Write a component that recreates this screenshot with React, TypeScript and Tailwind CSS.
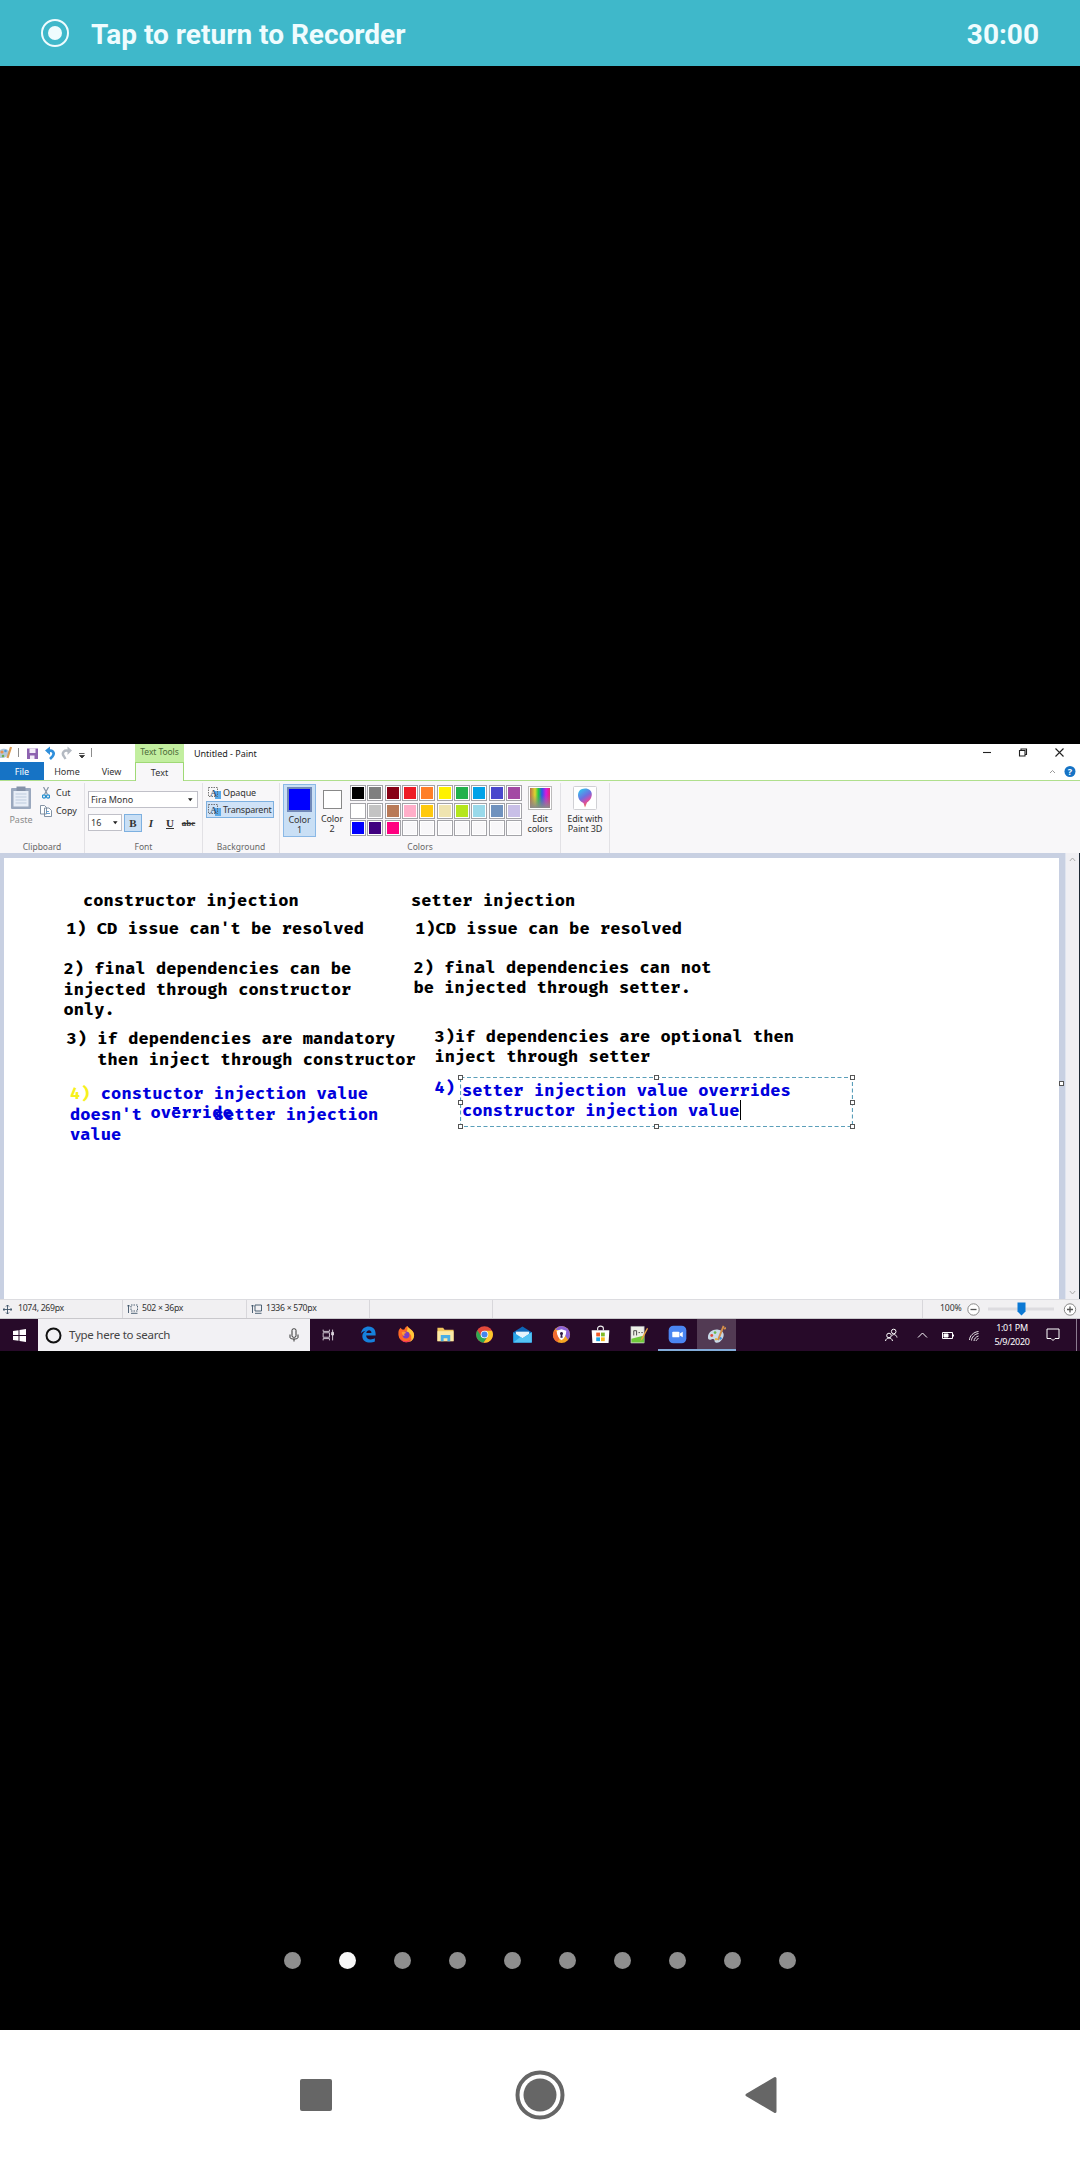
import React from "react";

const UI = "font-['Segoe_UI','Noto_Sans','Open_Sans',sans-serif]";

function TitleBar() {
  return (
    <div className="flex h-[37px] bg-white">
      <div className="flex w-[135px] flex-col">
        <div className="flex h-[18px] items-center">
          <svg width="93" height="18" viewBox="0 0 93 18" fill="none">
            <path d="M0 6C3 4 7.500 4 9 7.500S6 14.500 0 14Z" fill="#b3c6d9" />
            <circle cx="2" cy="8" r="1.600" fill="#e8924c" />
            <circle cx="5.500" cy="7" r="1.300" fill="#4f9be0" />
            <circle cx="3" cy="12" r="1.300" fill="#6ab04c" />
            <path d="M11 3 7.500 14" stroke="#d99a52" strokeWidth="2.200" />
            <path d="M18.500 4v9" stroke="#8d8d8d" />
            <path d="M27 4.500h11v10.500H27z" fill="#8d62b0" />
            <path d="M29.500 4.500h6v4.500h-6zM30 11.500h4.500v3.500h-4.500z" fill="#f3ecf8" />
            <path d="M47 7.500C52 5 55.500 8.500 52.500 12.500l-2.500 2.500" stroke="#2f8fdb" strokeWidth="2.600" />
            <path d="M45 6.500 50 2.500v8.500z" fill="#2f8fdb" />
            <path d="M69.500 7.500C64.500 5 61 8.500 64 12.500l1.500 2.500" stroke="#b4bac2" strokeWidth="2.400" />
            <path d="M72 6.500 67.500 2.500v8.500z" fill="#b4bac2" />
            <path d="M79 9.500h5.500M79.500 11.500h5l-2.500 2.500z" stroke="#333" strokeWidth=".8" fill="#333" />
            <path d="M91.500 4v9" stroke="#8d8d8d" />
          </svg>
        </div>
        <div className="flex h-[19px] items-center border-b border-[#b0df8d] text-[9px] text-[#333]">
          <div className="flex h-[18px] w-[44px] items-center justify-center bg-[#1673c5] pt-px text-white">File</div>
          <div className="w-[46px] pt-px text-center">Home</div>
          <div className="w-[43px] pt-px text-center">View</div>
        </div>
      </div>
      <div className="flex w-[49px] flex-col text-center">
        <div className="h-[18px] bg-[#c2ee9f] text-[8.500px] leading-[16px] tracking-[-0.08px] text-[#4d6b3a]">Text Tools</div>
        <div className="h-[19px] border border-b-0 border-[#9fd975] bg-[#f8f7f9] text-[9px] leading-[19px] text-[#333]">Text</div>
      </div>
      <div className="flex flex-1 flex-col border-b border-[#b0df8d]">
        <div className="flex h-[18px] items-center">
          <div className="ml-[10px] pt-px text-[9px] tracking-[-0.02px] text-[#222]">Untitled - Paint</div>
          <div className="ml-auto flex">
            <svg width="99" height="18" viewBox="0 0 99 18" fill="none" stroke="#222" strokeWidth="1.100">
              <path d="M2 8.500h8" />
              <path d="M38.500 6.500h5.500V12h-5.500zM40 6.500V5h5.500v5.500H44" />
              <path d="m74.500 4.500 8 8m0-8-8 8" />
            </svg>
          </div>
        </div>
        <div className="flex flex-1 items-center justify-end">
          <svg width="31" height="17" viewBox="0 0 31 17" fill="none">
            <path d="m1 10 2.500-2.500L6 10" stroke="#999" />
            <circle cx="21" cy="8.500" r="5.500" fill="#1673c5" />
            <text x="21" y="11.800" textAnchor="middle" fontSize="9" fontWeight="700" fill="#fff">?</text>
          </svg>
        </div>
      </div>
    </div>
  );
}

function Group({ w, label, children }: { w: string; label: string; children: React.ReactNode }) {
  return (
    <div className={"flex h-full shrink-0 flex-col border-r border-[#e2e1e5] " + w}>
      <div className="h-[58px]">{children}</div>
      <div className="text-center text-[8.500px] leading-[12px] text-[#666]">{label}</div>
    </div>
  );
}

function TextMode() {
  return (
    <svg width="13" height="12" viewBox="0 0 13 12" fill="none">
      <path d="M7 4h6v8H7z" fill="#58a9e8" />
      <path d="M.5.5h9v9h-9z" stroke="#555" strokeWidth=".8" strokeDasharray="1.500 1" />
      <text x="5.500" y="9" textAnchor="middle" fontSize="9" fontFamily="Liberation Serif" fontWeight="700" fill="#2b5578">A</text>
    </svg>
  );
}

const PALETTE = [
  "bg-[#000000]", "bg-[#7f7f7f]", "bg-[#880015]", "bg-[#ed1c24]", "bg-[#ff7f27]", "bg-[#fff200]", "bg-[#22b14c]", "bg-[#00a2e8]", "bg-[#4a48cc]", "bg-[#a349a4]",
  "bg-[#ffffff]", "bg-[#c3c3c3]", "bg-[#b97a57]", "bg-[#ffaec9]", "bg-[#ffc90e]", "bg-[#efe4b0]", "bg-[#b5e61d]", "bg-[#99d9ea]", "bg-[#7092be]", "bg-[#c8bfe7]",
  "bg-[#0000ff]", "bg-[#400080]", "bg-[#ff0080]", "bg-[#f8f7f9]", "bg-[#f8f7f9]", "bg-[#f8f7f9]", "bg-[#f8f7f9]", "bg-[#f8f7f9]", "bg-[#f8f7f9]", "bg-[#f8f7f9]",
];

function Ribbon() {
  return (
    <div className="flex h-[72px] bg-[#f8f7f9] pt-[2px] text-[9px] leading-[10px] text-[#333]">
      <Group w="w-[85px]" label="Clipboard">
        <div className="flex pt-[2px]">
          <div className="flex w-[42px] flex-col items-center gap-[5px] text-[#8b8b8b]">
            <svg width="22" height="25" viewBox="0 0 22 25">
              <rect x="1" y="3" width="20" height="21" rx="1" fill="#9aa8be" />
              <path d="M3.500 6h15v15.500h-15z" fill="#e8eef7" />
              <path d="M5.500 9h11M5.500 12h11M5.500 15h11M5.500 18h11" stroke="#bdcbdd" />
              <path d="M6.500 1.500h9V6h-9z" fill="#8592a8" />
            </svg>
            <span>Paste</span>
          </div>
          <div className="flex flex-col gap-[4px] pt-px">
            <div className="flex h-[14px] items-center gap-[6px]">
              <svg width="8" height="12" viewBox="0 0 8 12" fill="none">
                <path d="m1.500 0 4 7.500M6.500 0l-4 7.500" stroke="#8493a5" strokeWidth="1.200" />
                <circle cx="2" cy="9.500" r="1.600" stroke="#278fcf" strokeWidth="1.300" />
                <circle cx="6" cy="9.500" r="1.600" stroke="#278fcf" strokeWidth="1.300" />
              </svg>
              <span>Cut</span>
            </div>
            <div className="-ml-[2px] flex h-[14px] items-center gap-[4px]">
              <svg width="12" height="12" viewBox="0 0 12 12" fill="#fff" stroke="#75869a" strokeWidth=".9">
                <path d="M.5.5h4L6.500 2.500V9h-6zM4.500 3h4.500l2.500 2.500v6h-7z" />
                <path d="M6 6.500h3M6 8.500h4" stroke="#5b9ad0" />
              </svg>
              <span className="tracking-[-0.1px]">Copy</span>
            </div>
          </div>
        </div>
      </Group>
      <Group w="w-[118px]" label="Font">
        <div className="flex flex-col gap-[6px] pl-[3px] pt-[8px]">
          <div className="flex h-[17px] w-[110px] items-center justify-between border border-[#c0c0c8] bg-white px-[2px]">
            <span className="tracking-[-0.05px]">Fira Mono</span>
            <svg width="5" height="4" viewBox="0 0 6 4" className="mr-[2px]"><path d="M0 0h5.500L2.700 3.500z" fill="#222" /></svg>
          </div>
          <div className="flex h-[17px] items-center text-[11px]">
            <div className="flex h-[17px] w-[34px] items-center justify-between border border-[#c0c0c8] bg-white px-[2px] text-[9px]">
              <span>16</span>
              <svg width="5" height="4" viewBox="0 0 6 4" className="mr-px"><path d="M0 0h5.500L2.700 3.500z" fill="#222" /></svg>
            </div>
            <div className="ml-[2px] flex h-[18px] w-[18px] items-center justify-center border border-[#7db0e0] bg-[#c9dff5] font-['Liberation_Serif',serif] font-bold">B</div>
            <div className="w-[18px] text-center font-['Liberation_Serif',serif] font-bold italic">I</div>
            <div className="w-[20px] text-center font-['Liberation_Serif',serif] font-bold underline">U</div>
            <div className="w-[17px] text-center font-['Liberation_Serif',serif] text-[9px] font-bold line-through">abc</div>
          </div>
        </div>
      </Group>
      <Group w="w-[77px]" label="Background">
        <div className="flex flex-col pl-[3px] pt-[2px]">
          <div className="flex h-[15px] items-center gap-[2px] pl-[2px]"><TextMode /><span className="tracking-[-0.12px]">Opaque</span></div>
          <div className="mt-[1px] flex h-[17px] w-[68px] items-center gap-[2px] border border-[#7db0e0] bg-[#cfe2f7] pl-px tracking-[-0.22px]"><TextMode /><span>Transparent</span></div>
        </div>
      </Group>
      <Group w="w-[281px]" label="Colors">
        <div className="flex pl-[3px] pt-[1px] text-center">
          <div className="flex h-[53px] w-[33px] flex-col items-center border border-[#8ab8e6] bg-[#c9dff5] pt-[2px]">
            <div className="mb-[3px] h-[25px] w-[25px] border-2 border-[#7188b8] bg-[#0000ff]" />
            <span className="tracking-[-0.1px]">Color<br />1</span>
          </div>
          <div className="flex w-[32px] flex-col items-center pt-[6px]">
            <div className="mb-[5px] h-[19px] w-[19px] border border-[#888] bg-white" />
            <span className="tracking-[-0.1px]">Color<br />2</span>
          </div>
          <div className="ml-[2px] mt-[1px] grid h-[51px] w-[172px] grid-cols-10 gap-[1.500px]">
            {PALETTE.map((c, i) => (
              <div key={i} className="border border-[#a3a3a8] bg-white p-px"><div className={"h-full w-full " + c} /></div>
            ))}
          </div>
          <div className="ml-[5px] flex w-[26px] flex-col items-center pt-[2px]">
            <svg width="24" height="24" viewBox="0 0 24 24" className="mb-[4px] shrink-0">
              <defs>
                <linearGradient id="hue"><stop stopColor="#b86a4c" /><stop offset=".25" stopColor="#e0d62f" /><stop offset=".42" stopColor="#22c746" /><stop offset=".6" stopColor="#2a57e8" /><stop offset=".8" stopColor="#d51be0" /><stop offset="1" stopColor="#e8276b" /></linearGradient>
                <linearGradient id="fade" x2="0" y2="1"><stop offset=".35" stopColor="#888" stopOpacity="0" /><stop offset="1" stopColor="#8a8a8a" /></linearGradient>
              </defs>
              <rect x=".5" y=".5" width="23" height="23" fill="#fff" stroke="#bbb" />
              <path d="M2 2h20v20H2z" fill="url(#hue)" />
              <path d="M2 2h20v20H2z" fill="url(#fade)" />
            </svg>
            <span className="tracking-[-0.1px]">Edit<br />colors</span>
          </div>
        </div>
      </Group>
      <Group w="w-[49px]" label="">
        <div className="flex flex-col items-center pt-[3px] text-center">
          <svg width="24" height="24" viewBox="0 0 24 24" className="mb-[4px]">
            <defs><linearGradient id="drop" x1=".2" x2=".7" y2="1"><stop stopColor="#31c5ee" /><stop offset=".45" stopColor="#6f6ee0" /><stop offset=".7" stopColor="#d84ca5" /><stop offset="1" stopColor="#f08a30" /></linearGradient></defs>
            <rect x=".5" y=".5" width="23" height="23" rx="1" fill="#fff" stroke="#d0d0d4" />
            <path d="M12 2.500c9 0 8.500 10 2 14l-2 5-1.500-4.500C3 14 3 2.500 12 2.500" fill="url(#drop)" />
          </svg>
          <span className="whitespace-nowrap tracking-[-0.15px]">Edit with<br />Paint 3D</span>
        </div>
      </Group>
    </div>
  );
}

const NOTES: { at: string; text: string }[] = [
  { at: "left-[79px] top-[33px] text-black", text: "constructor injection" },
  { at: "left-[62px] top-[61px] text-black", text: "1) CD issue can't be resolved" },
  { at: "left-[59.500px] top-[101px] text-black", text: "2) final dependencies can be\ninjected through constructor\nonly." },
  { at: "left-[62.500px] top-[171px] text-black", text: "3) if dependencies are mandatory\n   then inject through constructor" },
  { at: "left-[146.500px] top-[245px] text-[#0000dc]", text: "override" },
  { at: "left-[407px] top-[33px] text-black", text: "setter injection" },
  { at: "left-[411px] top-[61px] text-black", text: "1)CD issue can be resolved" },
  { at: "left-[409.500px] top-[99.500px] text-black", text: "2) final dependencies can not\nbe injected through setter." },
  { at: "left-[430.500px] top-[168.500px] text-black", text: "3)if dependencies are optional then\ninject through setter" },
  { at: "left-[430.500px] top-[219.500px] text-[#0000dc]", text: "4)" },
];

const HANDLES = [
  "left-[-2px] top-[-2px]", "left-[194px] top-[-2px]", "left-[390px] top-[-2px]",
  "left-[-2px] top-[23px]", "left-[390px] top-[23px]",
  "left-[-2px] top-[47px]", "left-[194px] top-[47px]", "left-[390px] top-[47px]",
];

function Canvas() {
  return (
    <div className="flex h-[446px] bg-[#c8d0e2]">
      <div className="relative ml-[4px] mt-[5px] w-[1055px] bg-white font-['Fira_Mono','DejaVu_Sans_Mono',monospace] text-[17px] font-bold leading-[20.700px] tracking-[0.075px] whitespace-pre">
        {NOTES.map((n) => (
          <div key={n.at} className={"absolute " + n.at}>{n.text}</div>
        ))}
        <div className="absolute left-[66px] top-[226px] text-[#0000dc]">
          <span className="text-[#f7f11c]">4)</span>{" constuctor injection value\ndoesn't       setter injection\nvalue"}
        </div>
        <div className="absolute left-[169px] top-[249px] h-[2px] w-[6px] bg-[#0000dc]" />
        <div className="absolute left-[456px] top-[219px] h-[50px] w-[393px]">
          <svg width="393" height="50" viewBox="0 0 393 50" fill="none" className="absolute left-0 top-0">
            <path d="M.5.5h392v49H.5z" stroke="#5b9fba" strokeWidth="1.200" strokeDasharray="4 2.500" />
          </svg>
          {HANDLES.map((h) => (
            <div key={h} className={"absolute h-[5px] w-[5px] border border-[#555] bg-white " + h} />
          ))}
          <div className="pl-[2px] pt-[3.500px] text-[#0000dc]">{"setter injection value overrides\nconstructor injection value"}</div>
          <div className="absolute left-[280px] top-[23px] h-[20px] w-px bg-black" />
        </div>
        <div className="absolute left-[1055px] top-[223px] h-[5px] w-[5px] border border-[#555] bg-white" />
      </div>
      <div className="ml-auto flex w-[14px] flex-col items-center justify-between border-l border-[#dfe4ef] bg-[#f0eff3] py-[4px]">
        <svg width="7" height="5" viewBox="0 0 7 5" fill="none" stroke="#aaa"><path d="m.8 4 2.700-3L6.200 4" /></svg>
        <svg width="7" height="5" viewBox="0 0 7 5" fill="none" stroke="#aaa"><path d="m.8 1 2.700 3L6.200 1" /></svg>
      </div>
      <div className="w-px bg-[#1c2733]" />
    </div>
  );
}

function StatusBar() {
  return (
    <div className="flex h-[20px] items-center border-y border-t-[#dcdce0] border-b-[#c9c8cc] bg-[#f1f0f2] text-[8.700px] tracking-[-0.3px] text-[#333]">
      <div className="flex h-full w-[123px] items-center gap-[6px] border-r border-[#d8d7db] pl-[3px]">
        <svg width="9" height="9" viewBox="0 0 9 9" fill="none" stroke="#3c5268"><path d="M4.500 0v9M0 4.500h9M3 1.500 4.500 0 6 1.500M3 7.500 4.500 9 6 7.500M1.500 3 0 4.500 1.500 6M7.500 3 9 4.500 7.500 6" strokeWidth=".9" /></svg>
        1074, 269px
      </div>
      <div className="flex h-full w-[124px] items-center gap-[4px] border-r border-[#d8d7db] pl-[4px]">
        <svg width="11" height="10" viewBox="0 0 11 10" fill="none" stroke="#3c5268" strokeWidth=".9"><path d="M1.500 9V1M0 2.500 1.500 1 3 2.500M4 9.300h6.500" /><path d="M4 1h6.500v6H4z" strokeDasharray="1.500 1" /></svg>
        502 × 36px
      </div>
      <div className="flex h-full w-[123px] items-center gap-[4px] border-r border-[#d8d7db] pl-[4px]">
        <svg width="11" height="10" viewBox="0 0 11 10" fill="none" stroke="#3c5268" strokeWidth=".9"><path d="M1.500 9V1M0 2.500 1.500 1 3 2.500M4 9.300h6.500M4 1h6.500v6H4z" /></svg>
        1336 × 570px
      </div>
      <div className="h-full w-[123px] border-r border-[#d8d7db]" />
      <div className="ml-auto flex h-full w-[158px] items-center border-l border-[#d8d7db] pl-[17px]">
        <span className="w-[27px] tracking-[-0.1px]">100%</span>
        <svg width="113" height="16" viewBox="0 0 113 16" fill="none">
          <circle cx="6.500" cy="8.500" r="5.700" fill="#fff" stroke="#888" />
          <path d="M3.500 8.500h6" stroke="#555" strokeWidth="1.300" />
          <path d="M21 8h66" stroke="#dddce0" strokeWidth="3" />
          <path d="M50.500 1.500h8v9l-4 4-4-4z" fill="#0b78d4" />
          <circle cx="103" cy="8.500" r="5.700" fill="#fff" stroke="#888" />
          <path d="M100 8.500h6M103 5.500v6" stroke="#555" strokeWidth="1.300" />
        </svg>
      </div>
    </div>
  );
}

const APPS: React.ReactNode[] = [
  <g fill="none" stroke="#ddd5df" strokeWidth="1"><path d="M3.500 4v2h7V4M3.500 16v-2h7v2M3.500 7.500h7v5h-7zM14 4v12" /><path d="M13 7h2v3h-2z" fill="#ddd5df" /></g>,
  <path d="M2 9C3 3.500 6.500 1.500 10 1.500c5.500 0 8 4 7.500 9.500H7.500c.2 5 6 5 9.200 3v3.300C12 19.500 3.500 19 3.500 11.500 3.500 8.500 6 6.500 7.500 6 5.500 6 3.500 7 2 9m5.700-.7h5.400c0-3.600-4.800-3.800-5.400 0" fill="#1681dc" />,
  <g><path d="M1.500 8c0-2 1-4 2.500-5 .5 2 2 2 3.500 2 1-2 2-3.500 3.500-4 1 3 7 4 7 10a8.300 8.300 0 0 1-16.500-.5Z" fill="#ff6a26" /><path d="M11 1c1 3 7 4 7 10a8 8 0 0 1-5 7c4-6 2-9-3-11 1.500-2 1-4 1-6" fill="#ffc73a" /><path d="M3 12c2 6 8 7 13 2-3 6-11 6-13-2" fill="#ef3461" /><circle cx="9.500" cy="10.500" r="3.600" fill="#7b3fc4" /><path d="M5 7.500c2-1 4-.5 5 1-2 0-3 1-2 3-2 0-3-2-3-4" fill="#ff9a32" /></g>,
  <g><path d="M1.500 3h6l1.500 2h9.500v12h-17z" fill="#f2c65e" /><path d="M1.500 6.500h17V17h-17z" fill="#fce9a6" /><path d="M5 17v-6.500h10V17h-3v-3H8v3z" fill="#4aaee4" /></g>,
  <g><circle cx="10" cy="10" r="8.800" fill="#e2493b" /><path d="M2.400 5.600A8.800 8.800 0 0 0 9 18.700l4.500-7.200-7 .2z" fill="#2ea853" /><path d="M10 6h7.900A8.800 8.800 0 0 1 9 18.700l4.500-6.700C14.500 9 13 7 10 6" fill="#fbc72c" /><circle cx="10" cy="10" r="4" fill="#fff" /><circle cx="10" cy="10" r="3.200" fill="#4486ee" /></g>,
  <g><path d="m.3 7.500 9.700-6 9.700 6V18.500H.3z" fill="#0d65b6" /><path d="M3 7h14v7H3z" fill="#e6f4fc" /><path d="m.3 7.500 9.700 6.500 9.700-6.500v11H.3z" fill="#28a7e9" /><path d="m.3 18.500 7.500-6 2.200 1.500 9.700-6.500v11z" fill="#55c4f4" /></g>,
  <g><circle cx="10" cy="10" r="9" fill="#f5a623" /><path d="M10 1A9 9 0 0 1 19 10c0 2-1 4-2 5.500L10 6 3.500 5C5 2.500 7.500 1 10 1" fill="#8d62d5" /><path d="M3.500 5C-.5 9 .5 15.500 6 18L8 14z" fill="#ef6b30" /><path d="m5 6 5-1.500L15 6c0 5-2 8-5 10-3-2-5-5-5-10" fill="#fff" /><path d="M10 7.500a1.600 1.600 0 0 1 .8 3l.4 3H8.800l.4-3a1.600 1.600 0 0 1 .8-3" fill="#34204a" /></g>,
  <g><path d="M7 5.500V3.500c0-3 6-3 6 0v2" fill="none" stroke="#eee" strokeWidth="1.200" /><path d="M.7 5.500h18.600l-.8 13.500H1.500z" fill="#fff" /><path d="M5.500 8h4v4h-4z" fill="#f05a28" /><path d="M10.500 8h4v4h-4z" fill="#80ba27" /><path d="M5.500 13h4v4h-4z" fill="#19a5e5" /><path d="M10.500 13h4v4h-4z" fill="#fbb91e" /></g>,
  <g><path d="M2 1.500h14v17.500H2z" fill="#eef0e8" stroke="#a7adb0" strokeWidth=".6" /><path d="M2.500 14.500 16 11v7.500H2.500z" fill="#6fca3b" /><path d="M5 11V6h3v5m2-3h1.500M13 8h1.500" fill="none" stroke="#454545" /><path d="M19 3 13 14l-1 3 2.500-2.300L20 4z" fill="#e9a540" /></g>,
  <g><rect x=".7" y=".7" width="18.600" height="18.600" rx="5" fill="#4b86f2" /><rect x="4.500" y="7" width="7.500" height="6" rx="1" fill="#fff" /><path d="m12.500 9 3-2v6l-3-2z" fill="#fff" /></g>,
  <g><path d="M1 13C1 7 7 4 12 5c6 1 7 6 4 10-3 5-8 4-8 2s-1-3-3-2-4 1-4-2" fill="#c8d9e7" /><circle cx="5" cy="11" r="1.500" fill="#e04b3c" /><circle cx="8.500" cy="8" r="1.400" fill="#6bb94c" /><circle cx="14" cy="14" r="1.500" fill="#3d8fdc" /><circle cx="9.500" cy="15" r="1.200" fill="#e8b53c" /><path d="m17.500 1-6 15M18 4l2-1" stroke="#d58f4a" strokeWidth="2" /></g>,
];

function AppCell({ i, icon }: { i: number; icon: React.ReactNode }) {
  const state = i === 10 ? "bg-[#523a53] border-b-2 border-[#82abd8]" : i === 9 ? "border-b-2 border-[#82abd8]" : "border-b-2 border-transparent";
  const size = i === 0 ? "18" : "19";
  return (
    <div className={"flex h-full w-[38.700px] items-center justify-center pt-px " + state}>
      <svg width={size} height={size} viewBox="0 0 20 20">{icon}</svg>
    </div>
  );
}

function Taskbar() {
  return (
    <div className="flex h-[32px] bg-[#270a29] text-white">
      <div className="flex w-[38px] items-center justify-center">
        <svg width="13" height="13" viewBox="0 0 13 13" fill="#fff"><path d="M0 2 5.500 1.200V6H0zM6.500 1 13 0v6H6.500zM0 7h5.500v4.800L0 11zM6.500 7H13v6l-6.500-1z" /></svg>
      </div>
      <div className="flex w-[272px] items-center bg-[#f2f1f4] pl-[7px] pr-[11px] text-[#444]">
        <svg width="17" height="17" viewBox="0 0 17 17"><circle cx="8.500" cy="8.500" r="7" fill="none" stroke="#111" strokeWidth="2" /></svg>
        <span className="ml-[7px] text-[11.500px] tracking-[-0.25px]">Type here to search</span>
        <svg className="ml-auto" width="10" height="14" viewBox="0 0 10 14" fill="none" stroke="#333"><rect x="3" y=".8" width="4" height="8.500" rx="1.500" /><path d="M1 6.500v3c0 2 8 2 8 0v-3M5 11v2.500" /></svg>
      </div>
      <div className="flex">{APPS.map((a, i) => <AppCell key={i} i={i} icon={a} />)}</div>
      <div className="ml-auto flex items-center">
        <svg width="96" height="18" viewBox="0 0 96 18" fill="none" stroke="#fff" strokeWidth="1">
          <circle cx="5" cy="9.500" r="2.300" /><path d="M1.500 15c.5-4 6.500-4 7 0" /><circle cx="9.700" cy="5.500" r="2.300" /><path d="M8 9.500c2-2 4.500-.5 5 2" />
          <path d="m34 11.500 4.500-4.500 4.500 4.500" />
          <path d="M58.500 6.500h10v6h-10zM69.500 8.500v2" /><path d="M60 8h4v3h-4z" fill="#fff" />
          <path d="M85.500 14c0-4 4-8 9-8.500M87.500 14.500c0-3 3-6.500 7-7M90 15c0-2 2-4.500 4.500-5M92 15c.5-1 1-2 2.500-2.500" strokeWidth=".9" />
        </svg>
        <div className="ml-[12px] w-[40px] whitespace-nowrap text-center text-[9px] leading-[14px] tracking-[-0.3px]">1:01 PM<br />5/9/2020</div>
        <svg className="ml-[14px]" width="14" height="14" viewBox="0 0 14 14" fill="none" stroke="#fff"><path d="M1 1h12v9.500H9L7 12.500 5 10.500H1z" /></svg>
        <div className="ml-[16px] h-[32px] w-[4px] border-l border-[#8c7b90]" />
      </div>
    </div>
  );
}

export default function App() {
  return (
    <div className="flex h-[2160px] w-[1080px] flex-col overflow-hidden bg-black">
      <header className="flex h-[66px] items-center bg-[#3fb8ca] pl-[40px] pr-[41px] font-['Roboto',sans-serif] text-[28px] font-bold text-[#effcfe]">
        <svg width="30" height="30" viewBox="0 0 30 30" className="mr-[21px]"><circle cx="15" cy="15" r="13" fill="none" stroke="currentColor" strokeWidth="2" /><circle cx="15" cy="15" r="7" fill="currentColor" /></svg>
        <span className="mt-[3px]">Tap to return to Recorder</span>
        <span className="ml-auto mt-[3px]">30:00</span>
      </header>
      <main className={"mt-[678px] flex flex-col " + UI}>
        <TitleBar />
        <Ribbon />
        <Canvas />
        <StatusBar />
        <Taskbar />
      </main>
      <div className="mt-[601px] flex justify-center gap-[38px]">
        {Array.from({ length: 10 }, (_, i) => (
          <div key={i} className={"h-[17px] w-[17px] rounded-full " + (i === 1 ? "bg-[#f7f7f7]" : "bg-[#8e8e8e]")} />
        ))}
      </div>
      <nav className="mt-auto flex h-[130px] items-center justify-between bg-white pl-[300px] pr-[303px]">
        <div className="h-[32px] w-[32px] rounded-[2px] bg-[#666]" />
        <svg width="50" height="50" viewBox="0 0 50 50" fill="#666" className="ml-[3px]"><circle cx="25" cy="25" r="22.500" fill="none" stroke="#666" strokeWidth="4" /><circle cx="25" cy="25" r="16.500" /></svg>
        <svg width="32" height="38" viewBox="0 0 32 38" fill="#666" stroke="#666" strokeWidth="3" strokeLinejoin="round"><path d="M2 19 30 2.500v33z" /></svg>
      </nav>
    </div>
  );
}
